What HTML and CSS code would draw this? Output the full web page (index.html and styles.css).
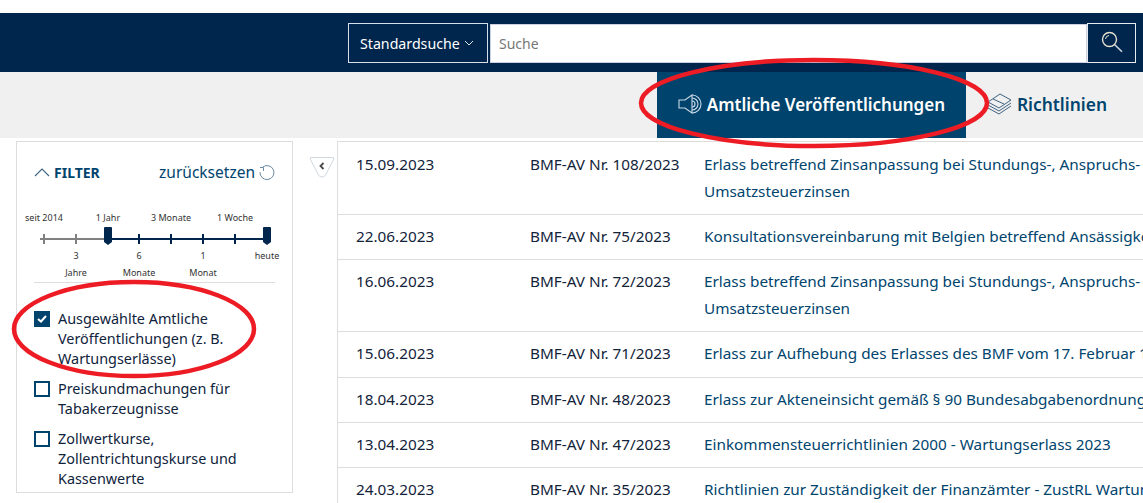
FILE: index.html
```html
<!DOCTYPE html>
<html lang="de">
<head>
  <meta charset="UTF-8" />
  <meta name="viewport" content="width=device-width, initial-scale=1.0"/>
  <title>Amtliche Veröffentlichungen</title>
  <link rel="stylesheet" href="styles.css">
</head>
<body>
  <header class="top-bar">
    <div class="search-type">Standardsuche
      <svg class="search-caret" width="10" height="6" viewBox="0 0 10 6"><path d="M1 1l4 4 4-4" fill="none" stroke="#dfe6ee" stroke-width="1"/></svg>
    </div>
    <div class="search-input">Suche</div>
    <div class="search-button">
      <svg width="24" height="24" viewBox="0 0 24 24" fill="none"><circle cx="9.5" cy="9.5" r="7" stroke="#e8e2d0" stroke-width="1.4"/><path d="M14.8 14.8l7.2 7" stroke="#cfd8e3" stroke-width="1.6"/><path d="M5.5 9a4 4 0 0 1 3.5-3.5" stroke="#e8e2d0"/></svg>
    </div>
  </header>

  <nav class="tab-bar">
    <a class="tab tab-active">
      <svg width="24" height="20" viewBox="0 0 24 20" fill="none" stroke="#c9d8e4" stroke-width="1.1"><path d="M1 6h6l7-5v18l-7-5H1z"/><path d="M14 1a9 9 0 0 1 0 18"/><path d="M14 4a6 6 0 0 1 0 12"/><path d="M14 7a3 3 0 0 1 0 6"/></svg>
      Amtliche Veröffentlichungen
    </a>
    <a class="tab">
      <svg width="25" height="24" viewBox="0 0 25 24" fill="none" stroke="#3f6482" stroke-width="1"><path d="M1 10L13 2l11 6-12 8z"/><path d="M6 7l11 5"/><path d="M1 13l11 6 12-8"/><path d="M1 16l11 6 12-8"/></svg>
      Richtlinien
    </a>
  </nav>

  <main class="content">
    <aside class="filter">
      <div class="filter-head">
        <span class="filter-title">
          <svg width="16" height="9" viewBox="0 0 16 9"><path d="M1 8l7-7 7 7" fill="none" stroke="#3f6482" stroke-width="1.1"/></svg>
          FILTER
        </span>
        <span class="filter-reset">zurücksetzen
          <svg width="16" height="16" viewBox="0 0 16 16" fill="none" stroke="#5f7f99" stroke-width="0.9"><path d="M4 2.8A7 7 0 1 1 1 8"/><path d="M1 3.5h3.5V7"/></svg>
        </span>
      </div>

      <svg class="slider" width="260" height="70" viewBox="0 0 260 70">
        <g class="slider-labels" text-anchor="middle">
          <text x="20" y="9">seit 2014</text>
          <text x="84" y="9">1 Jahr</text>
          <text x="147" y="9">3 Monate</text>
          <text x="211" y="9">1 Woche</text>
          <text x="52" y="47">3</text>
          <text x="115" y="47">6</text>
          <text x="179" y="47">1</text>
          <text x="243" y="47">heute</text>
          <text x="52" y="64">Jahre</text>
          <text x="115" y="64">Monate</text>
          <text x="179" y="64">Monat</text>
        </g>
        <path d="M16 27h68" stroke="#808080" stroke-width="2"/>
        <path d="M84 27h159" stroke="#00264d" stroke-width="2"/>
        <path d="M20 22v10M52 22v10" stroke="#808080" stroke-width="2"/>
        <path d="M115 22v10M147 22v10M179 22v10M211 22v10" stroke="#00264d" stroke-width="2"/>
        <path d="M80 16a1 1 0 0 1 1-1h6a1 1 0 0 1 1 1v14l-4 3-4-3z" fill="#00264d"/>
        <path d="M239 16a1 1 0 0 1 1-1h6a1 1 0 0 1 1 1v14l-4 3-4-3z" fill="#00264d"/>
      </svg>

      <ul class="filter-list">
        <li class="filter-item">
          <span class="check check-on"><svg width="10" height="8" viewBox="0 0 10 8"><path d="M1 4l3 2.5L9 1" fill="none" stroke="#fff" stroke-width="2"/></svg></span>
          <span>Ausgewählte Amtliche Veröffentlichungen (z. B. Wartungserlässe)</span>
        </li>
        <li class="filter-item">
          <span class="check"></span>
          <span>Preiskundmachungen für Tabakerzeugnisse</span>
        </li>
        <li class="filter-item">
          <span class="check"></span>
          <span>Zollwertkurse, Zollentrichtungskurse und Kassenwerte</span>
        </li>
      </ul>
    </aside>

    <div class="gutter">
      <svg width="26" height="23" viewBox="0 0 26 23"><path d="M2 1.5h22a1 1 0 0 1 .8 1.5L16.5 19q-1 2-3.5 2t-3.5-2L1.2 3a1 1 0 0 1 .8-1.5z" fill="#fff" stroke="#d0d8e0"/><path d="M14.5 7l-3 3 3 3" fill="none" stroke="#4a4a4a" stroke-width="1.8"/></svg>
    </div>

    <section class="results">
      <div class="row"><span>15.09.2023</span><span>BMF-AV Nr. 108/2023</span><a>Erlass betreffend Zinsanpassung bei Stundungs-, Anspruchs-<br>Umsatzsteuerzinsen</a></div>
      <div class="row"><span>22.06.2023</span><span>BMF-AV Nr. 75/2023</span><a>Konsultationsvereinbarung mit Belgien betreffend Ansässigkeit</a></div>
      <div class="row"><span>16.06.2023</span><span>BMF-AV Nr. 72/2023</span><a>Erlass betreffend Zinsanpassung bei Stundungs-, Anspruchs-<br>Umsatzsteuerzinsen</a></div>
      <div class="row"><span>15.06.2023</span><span>BMF-AV Nr. 71/2023</span><a>Erlass zur Aufhebung des Erlasses des BMF vom 17. Februar 1998</a></div>
      <div class="row"><span>18.04.2023</span><span>BMF-AV Nr. 48/2023</span><a>Erlass zur Akteneinsicht gemäß § 90 Bundesabgabenordnung</a></div>
      <div class="row"><span>13.04.2023</span><span>BMF-AV Nr. 47/2023</span><a>Einkommensteuerrichtlinien 2000 - Wartungserlass 2023</a></div>
      <div class="row"><span>24.03.2023</span><span>BMF-AV Nr. 35/2023</span><a>Richtlinien zur Zuständigkeit der Finanzämter - ZustRL Wartung</a></div>
    </section>
  </main>

  <svg class="marks" width="1143" height="503" viewBox="0 0 1143 503" fill="none" stroke="#ed1c24" stroke-width="4.5">
    <ellipse cx="814" cy="103" rx="173" ry="43"/>
    <ellipse cx="134" cy="329" rx="120" ry="47"/>
  </svg>
</body>
</html>
```

FILE: styles.css
```css
html, body {
  height: 100%;
}

body {
  position: relative;
  margin: 0;
  overflow: hidden;
  background-color: #fff;
  color: #12233a;
  font-family: "Noto Sans", sans-serif;
  font-size: 15.3px;
}

.top-bar {
  display: flex;
  justify-content: flex-end;
  align-items: stretch;
  height: 40px;
  margin-top: 13px;
  padding: 10px 7px 9px 0;
  background-color: #00264d;
}

.search-type {
  display: flex;
  align-items: center;
  gap: 4px;
  width: 140px;
  padding-left: 11px;
  box-sizing: border-box;
  border: 1px solid #d7e0ea;
  color: #fff;
  font-size: 14.2px;
}

.search-input {
  display: flex;
  align-items: center;
  width: 597px;
  margin: 1px 0 0 2px;
  padding-left: 8px;
  box-sizing: border-box;
  background-color: #fff;
  border: 1px solid #ccd0e0;
  color: #777;
  font-size: 14px;
}

.search-button {
  display: flex;
  align-items: center;
  justify-content: center;
  width: 49px;
  padding-bottom: 2px;
  box-sizing: border-box;
  border: 1px solid #e6ebf0;
}

.tab-bar {
  display: flex;
  justify-content: flex-end;
  height: 66px;
  padding-right: 36px;
  background-color: #f0f0f0;
}

.tab {
  display: flex;
  align-items: center;
  gap: 5px;
  padding-bottom: 2px;
  color: #00446e;
  font-size: 17px;
  font-weight: 600;
}

.tab + .tab {
  font-size: 17.4px;
}

.tab-active {
  justify-content: center;
  width: 309px;
  margin-right: 21px;
  background-color: #00446e;
  color: #fff;
}

.content {
  display: grid;
  grid-template-columns: 277px 44px 1fr;
  padding: 3px 0 0 16px;
}

.filter {
  height: 352px;
  box-sizing: border-box;
  padding: 0 17px;
  border: 1px solid #ddd;
  overflow: hidden;
}

.filter-head {
  display: flex;
  justify-content: space-between;
  align-items: center;
  height: 60px;
  color: #00446e;
}

.filter-title {
  display: flex;
  align-items: center;
  gap: 4px;
  font-weight: 700;
  font-size: 14px;
}

.filter-reset {
  display: flex;
  align-items: center;
  gap: 4px;
  font-size: 15.5px;
}

.slider {
  display: block;
  margin: 10px 0 0 -10px;
}

.slider-labels {
  fill: #333;
  font-size: 9px;
}

.filter-list {
  margin: 0;
  padding: 26px 0 0;
  border-top: 1px solid #ddd;
  list-style: none;
}

.filter-item {
  display: flex;
  gap: 8px;
  margin-bottom: 10px;
  line-height: 20px;
  font-size: 14.4px;
  color: #10233c;
}

.check {
  display: flex;
  align-items: center;
  justify-content: center;
  flex: none;
  width: 16px;
  height: 16px;
  margin-top: 2px;
  box-sizing: border-box;
  border: 2px solid #00446e;
}

.check-on {
  background-color: #00446e;
}

.gutter {
  padding: 15px 0 0 16px;
}

.results {
  min-width: 0;
  padding-top: 1px;
  border-top: 1px solid #ddd;
  border-left: 1px solid #ddd;
}

.row {
  display: grid;
  grid-template-columns: 174px 174px 1fr;
  padding: 8px 0 9px 18px;
  border-bottom: 1px solid #ddd;
  line-height: 27.1px;
  white-space: nowrap;
}

.row a {
  color: #00446e;
}

.marks {
  position: absolute;
  top: 0;
  left: 0;
  pointer-events: none;
}
```
